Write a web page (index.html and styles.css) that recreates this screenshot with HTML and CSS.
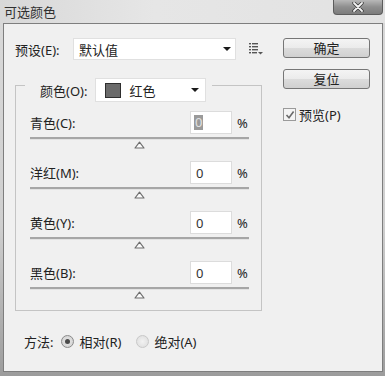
FILE: index.html
```html
<!DOCTYPE html>
<html lang="zh-CN">
<head>
  <meta charset="UTF-8" />
  <title>可选颜色</title>
  <link rel="stylesheet" href="styles.css">
</head>
<body>
  <div class="window">
    <div class="titlebar">
      <span class="title">可选颜色</span>
      <div class="close">
        <svg width="14" height="10" viewBox="0 0 14 10">
          <path d="M3 1 L11 9 M11 1 L3 9" stroke="#3a3a3a" stroke-width="3.4" stroke-linecap="round"/>
          <path d="M3 1 L11 9 M11 1 L3 9" stroke="#f4f4f4" stroke-width="1.8" stroke-linecap="round"/>
        </svg>
      </div>
    </div>

    <div class="client">
      <div class="main">
        <div class="preset">
          <span class="preset-label">预设(E):</span>
          <div class="select preset-select">
            <span>默认值</span>
            <span class="caret"></span>
          </div>
          <svg class="list-icon" width="14" height="12" viewBox="0 0 14 12">
            <g fill="#555">
              <rect x="0" y="0" width="2" height="1.4"/>
              <rect x="3" y="0" width="6" height="1.4"/>
              <rect x="0" y="3" width="2" height="1.4"/>
              <rect x="3" y="3" width="6" height="1.4"/>
              <rect x="0" y="6" width="2" height="1.4"/>
              <rect x="3" y="6" width="6" height="1.4"/>
              <rect x="0" y="9" width="2" height="1.4"/>
              <rect x="3" y="9" width="5" height="1.4"/>
              <path d="M9 9 L14 9 L11.5 11.5 Z"/>
            </g>
          </svg>
        </div>

        <div class="group">
          <div class="group-head">
            <span class="label">颜色(O):</span>
            <div class="select color-select">
              <span class="swatch"></span>
              <span>红色</span>
              <span class="caret"></span>
            </div>
          </div>

          <div class="channel">
            <div class="field">
              <span class="label">青色(C):</span>
              <div class="num"><span class="sel">0</span></div>
              <span class="pct">%</span>
            </div>
            <div class="slider">
              <div class="track"></div>
              <svg class="thumb" width="11" height="8" viewBox="0 0 11 8"><path d="M1 7 L5.5 1.2 L10 7 Z" fill="#fbfbfb" stroke="#6e6e6e" stroke-width="1.2" stroke-linejoin="round"/></svg>
            </div>
          </div>

          <div class="channel">
            <div class="field">
              <span class="label">洋红(M):</span>
              <div class="num">0</div>
              <span class="pct">%</span>
            </div>
            <div class="slider">
              <div class="track"></div>
              <svg class="thumb" width="11" height="8" viewBox="0 0 11 8"><path d="M1 7 L5.5 1.2 L10 7 Z" fill="#fbfbfb" stroke="#6e6e6e" stroke-width="1.2" stroke-linejoin="round"/></svg>
            </div>
          </div>

          <div class="channel">
            <div class="field">
              <span class="label">黄色(Y):</span>
              <div class="num">0</div>
              <span class="pct">%</span>
            </div>
            <div class="slider">
              <div class="track"></div>
              <svg class="thumb" width="11" height="8" viewBox="0 0 11 8"><path d="M1 7 L5.5 1.2 L10 7 Z" fill="#fbfbfb" stroke="#6e6e6e" stroke-width="1.2" stroke-linejoin="round"/></svg>
            </div>
          </div>

          <div class="channel">
            <div class="field">
              <span class="label">黑色(B):</span>
              <div class="num">0</div>
              <span class="pct">%</span>
            </div>
            <div class="slider">
              <div class="track"></div>
              <svg class="thumb" width="11" height="8" viewBox="0 0 11 8"><path d="M1 7 L5.5 1.2 L10 7 Z" fill="#fbfbfb" stroke="#6e6e6e" stroke-width="1.2" stroke-linejoin="round"/></svg>
            </div>
          </div>
        </div>

        <div class="method">
          <span class="label">方法:</span>
          <span class="radio checked"></span>
          <span class="label">相对(R)</span>
          <span class="radio"></span>
          <span class="label">绝对(A)</span>
        </div>
      </div>

      <div class="side">
        <button class="btn">确定</button>
        <button class="btn">复位</button>
        <div class="check">
          <span class="box">
            <svg width="10" height="10" viewBox="0 0 10 10"><path d="M1.5 5 L4 7.8 L8.6 1.5" fill="none" stroke="#6a6a6a" stroke-width="1.6"/></svg>
          </span>
          <span class="label">预览(P)</span>
        </div>
      </div>
    </div>
  </div>
</body>
</html>
```

FILE: styles.css
```css
body, html {
  margin: 0;
  padding: 0;
}

body {
  width: 385px;
  height: 376px;
  overflow: hidden;
  font-family: "Noto Sans", "Noto Sans CJK SC", sans-serif;
  font-size: 12.5px;
  color: #222;
}

.window {
  width: 385px;
  height: 376px;
  background: linear-gradient(to bottom, #d9d9d9, #cfcfcf 60%, #9c9c9c);
  display: flex;
  flex-direction: column;
}

.titlebar {
  height: 23px;
  display: flex;
  align-items: flex-start;
  padding-left: 4px;
  background: linear-gradient(to right, #d8d8d8, #e6e6e6 40%, #e2e2e2);
}

.title {
  margin-top: 3px;
  font-size: 13px;
  line-height: 18px;
  color: #303030;
}

.close {
  margin-left: auto;
  margin-right: 2px;
  width: 50px;
  height: 15px;
  box-sizing: border-box;
  border: 1px solid #5c5c5c;
  border-top: none;
  border-radius: 0 0 4px 4px;
  background: linear-gradient(to bottom, #b8b8b8, #8e8e8e 50%, #7c7c7c);
  display: flex;
  align-items: center;
  justify-content: center;
}

.client {
  margin: 0 2px 0 3px;
  height: 349px;
  box-sizing: border-box;
  border: 1px solid #7e7e7e;
  background: #f0f0f0;
  display: flex;
}

.main {
  width: 262px;
  box-sizing: border-box;
  padding-left: 11px;
}

.preset {
  margin-top: 14px;
  height: 22px;
  display: flex;
  align-items: center;
}

.preset-label {
  width: 58px;
  font-size: 13px;
}

.select {
  height: 22px;
  box-sizing: border-box;
  background: #fff;
  border: 1px solid #e0e0e0;
  display: flex;
  align-items: center;
}

.preset-select {
  width: 163px;
  padding-left: 5px;
  font-size: 13px;
}

.caret {
  margin-left: auto;
  width: 0;
  height: 0;
  border-left: 4px solid transparent;
  border-right: 4px solid transparent;
  border-top: 4px solid #1a1a1a;
}

.preset-select .caret {
  margin-right: 4px;
}

.list-icon {
  margin-left: 13px;
}

.group {
  margin-top: 25px;
  width: 247px;
  box-sizing: border-box;
  border: 1px solid #c4c4c4;
  padding: 0 12px 0 14px;
}

.group-head {
  margin: -8px 0 0 -5px;
  height: 24px;
  width: 187px;
  box-sizing: border-box;
  padding-left: 15px;
  background: #f0f0f0;
  display: flex;
  align-items: center;
  font-size: 13px;
}

.color-select {
  margin-left: 8px;
  width: 111px;
  height: 24px;
  padding-left: 9px;
}

.swatch {
  width: 14px;
  height: 13px;
  background: #6a6a6a;
  border: 1px solid #2e2e2e;
  margin-right: 8px;
}

.color-select .caret {
  margin-right: 6px;
}

.group-head + .channel {
  margin-top: 9px;
}

.field {
  height: 23px;
  display: flex;
  align-items: center;
}

.field .label {
  flex: 1;
  font-size: 13px;
}

.num {
  width: 42px;
  height: 23px;
  box-sizing: border-box;
  background: #fff;
  border: 1px solid #dcdcdc;
  padding-left: 5px;
  display: flex;
  align-items: center;
  font-size: 13px;
  color: #333;
}

.sel {
  background: #9a9a9a;
  color: #e2e2e2;
  line-height: 15px;
  padding: 0 1px;
  margin-left: -2px;
}

.pct {
  margin-left: 5px;
  width: 12px;
  font-size: 13px;
}

.slider {
  height: 27px;
  display: flex;
  flex-direction: column;
  align-items: center;
}

.channel:last-child .slider {
  height: 26px;
}

.track {
  margin-top: 3px;
  width: 100%;
  height: 2px;
  background: #a6a6a6;
  border-bottom: 1px solid #e2e2e2;
}

.thumb {
  margin-top: 1px;
}

.method {
  margin-top: 21px;
  height: 18px;
  padding-left: 9px;
  display: flex;
  align-items: center;
  font-size: 13px;
}

.radio {
  width: 11px;
  height: 11px;
  border-radius: 50%;
  border: 1px solid #a8a8a8;
  background: radial-gradient(circle, #e8e8e8, #cfcfcf);
  margin: 0 5px 0 8px;
  display: flex;
  align-items: center;
  justify-content: center;
}

.radio.checked::after {
  content: "";
  width: 5px;
  height: 5px;
  border-radius: 50%;
  background: #4a4a4a;
}

.radio.checked {
  border-color: #8a8a8a;
}

.method .radio + .label + .radio {
  margin-left: 15px;
  border-color: #c8c8c8;
  background: radial-gradient(circle, #f2f2f2, #dcdcdc);
}

.side {
  padding: 14px 0 0 17px;
  display: flex;
  flex-direction: column;
  align-items: flex-start;
}

.btn {
  width: 87px;
  height: 20px;
  padding: 0;
  font-family: "Noto Sans CJK SC", sans-serif;
  font-size: 13px;
  line-height: 18px;
  color: #222;
  border: 1px solid #767676;
  border-radius: 3px;
  background: linear-gradient(to bottom, #f4f4f4, #ebebeb 50%, #dcdcdc 51%, #d0d0d0);
}

.btn + .btn {
  margin-top: 11px;
}

.check {
  margin-top: 16px;
  display: flex;
  align-items: center;
  font-size: 13px;
}

.box {
  width: 11px;
  height: 11px;
  border: 1px solid #9a9a9a;
  background: #f4f4f4;
  display: flex;
  align-items: center;
  justify-content: center;
  margin-right: 3px;
}
```
